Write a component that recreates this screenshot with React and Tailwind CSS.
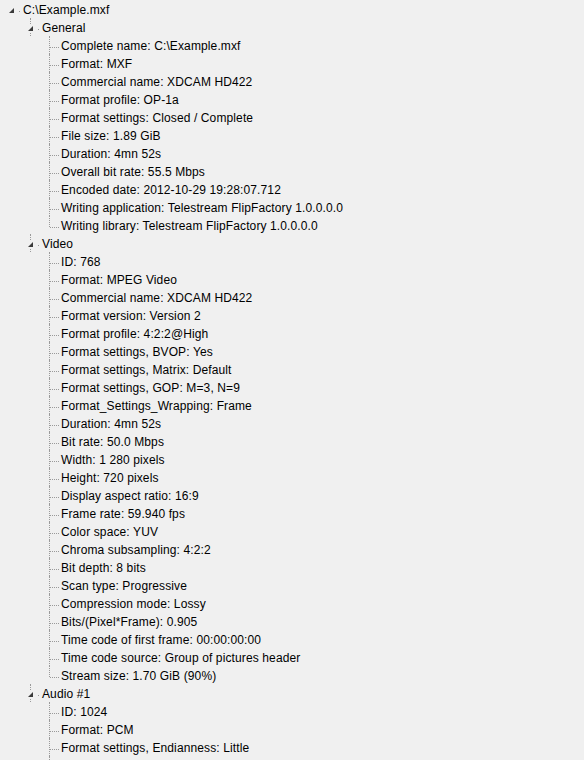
import React from "react";

const leaf = (l) => ({ label: l });

const tree = {
  label: "C:\\Example.mxf",
  children: [
    {
      label: "General",
      children: [
        "Complete name: C:\\Example.mxf",
        "Format: MXF",
        "Commercial name: XDCAM HD422",
        "Format profile: OP-1a",
        "Format settings: Closed / Complete",
        "File size: 1.89 GiB",
        "Duration: 4mn 52s",
        "Overall bit rate: 55.5 Mbps",
        "Encoded date: 2012-10-29 19:28:07.712",
        "Writing application: Telestream FlipFactory 1.0.0.0.0",
        "Writing library: Telestream FlipFactory 1.0.0.0.0",
      ].map(leaf),
    },
    {
      label: "Video",
      children: [
        "ID: 768",
        "Format: MPEG Video",
        "Commercial name: XDCAM HD422",
        "Format version: Version 2",
        "Format profile: 4:2:2@High",
        "Format settings, BVOP: Yes",
        "Format settings, Matrix: Default",
        "Format settings, GOP: M=3, N=9",
        "Format_Settings_Wrapping: Frame",
        "Duration: 4mn 52s",
        "Bit rate: 50.0 Mbps",
        "Width: 1 280 pixels",
        "Height: 720 pixels",
        "Display aspect ratio: 16:9",
        "Frame rate: 59.940 fps",
        "Color space: YUV",
        "Chroma subsampling: 4:2:2",
        "Bit depth: 8 bits",
        "Scan type: Progressive",
        "Compression mode: Lossy",
        "Bits/(Pixel*Frame): 0.905",
        "Time code of first frame: 00:00:00:00",
        "Time code source: Group of pictures header",
        "Stream size: 1.70 GiB (90%)",
      ].map(leaf),
    },
    {
      label: "Audio #1",
      children: [
        "ID: 1024",
        "Format: PCM",
        "Format settings, Endianness: Little",
        "Format settings, Sign: Signed",
        "Duration: 4mn 52s",
        "Bit rate mode: Constant",
      ].map(leaf),
    },
    {
      label: "Audio #2",
      children: ["ID: 1025", "Format: PCM"].map(leaf),
    },
  ],
};

function flatten(node, level, isLast, cont, out) {
  const expandable = !!node.children;
  out.push({ label: node.label, level, isLast, cont, expandable });
  if (node.children) {
    node.children.forEach((c, i) => {
      const last = i === node.children.length - 1;
      flatten(c, level + 1, last, [...cont, !isLast || level === 0], out);
    });
  }
  return out;
}

const rows = flatten(tree, 0, true, [], []);

const LINE = "border-[#9a9a9a]";

function Row({ r }) {
  const cells = [];
  for (let i = 0; i < r.level; i++) {
    let showLine = false;
    if (i >= 1) {
      showLine = r.cont[i + 1] !== undefined ? r.cont[i + 1] : false;
    }
    cells.push(
      <div key={i} className="relative w-[19px] h-[18px] shrink-0">
        {showLine && (
          <div className={`absolute left-[11px] top-0 h-[18px] border-l border-dotted ${LINE}`} />
        )}
      </div>
    );
  }
  return (
    <div className="flex h-[18px] items-start">
      {cells}
      <div className="relative w-[19px] h-[18px] shrink-0">
        {r.level >= 1 && (
          <div
            className={`absolute left-[11px] top-0 border-l border-dotted ${LINE} ${
              r.isLast ? "h-[11px]" : "h-[18px]"
            }`}
          />
        )}
        {r.expandable ? (
          <>
            <svg
              className="absolute left-[8px] top-[7px]"
              width="7"
              height="7"
              viewBox="0 0 7 7"
            >
              <rect x="0" y="0" width="7" height="7" fill="#f0f0f0" />
              <polygon points="6,1 6,6 1,6" fill="#3a3a3a" />
            </svg>
            <div className="absolute left-[19px] top-[11px] w-px h-px bg-[#9a9a9a]" />
          </>
        ) : (
          <div className={`absolute left-[12px] top-[11px] w-[9px] border-t border-dotted ${LINE}`} />
        )}
      </div>
      <span className="pl-[4px] pt-[1px] whitespace-nowrap text-[12px] leading-[18px] tracking-[0.12px] text-black">
        {r.label}
      </span>
    </div>
  );
}

export default function App() {
  return (
    <div
      className="w-[584px] h-[760px] overflow-hidden bg-[#f0f0f0]"
      style={{ fontFamily: '"Liberation Sans", Arial, sans-serif' }}
    >
      {rows.map((r, i) => (
        <Row key={i} r={r} />
      ))}
    </div>
  );
}
